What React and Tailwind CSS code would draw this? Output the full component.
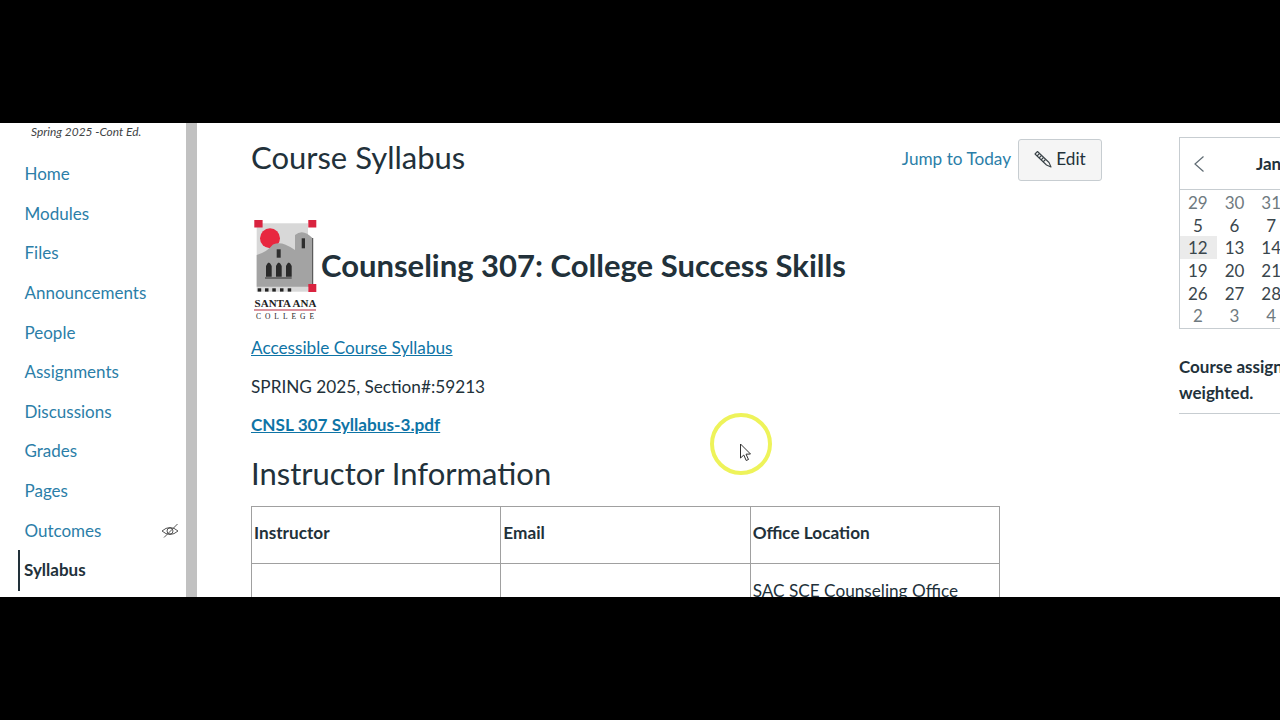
import React from 'react';

const navItems = ['Home', 'Modules', 'Files', 'Announcements', 'People', 'Assignments', 'Discussions', 'Grades', 'Pages'];

const calendarRows = [
    [['29', 1], ['30', 1], ['31', 1]],
    [['5'], ['6'], ['7']],
    [['12', 0, 1], ['13'], ['14']],
    [['19'], ['20'], ['21']],
    [['26'], ['27'], ['28']],
    [['2', 1], ['3', 1], ['4', 1]],
];

const Logo = () => (
    <svg width="66" height="103" viewBox="0 0 66 103" className="shrink-0">
        <rect x="5.700" y="6.300" width="51.300" height="68.400" fill="#d8d8d8" />
        <circle cx="19" cy="21.300" r="10" fill="#e8273f" />
        <path d="M5.700 38 Q16 35 22 27.500 Q28 25 34 27.500 Q40 30 44 33 L44 18 Q52 11 61.700 21.300 L61.700 69.700 L5.700 69.700 Z" fill="#a3a3a3" />
        <rect x="61.200" y="21" width="1" height="49" fill="#444" />
        <rect x="50.700" y="21.300" width="3.300" height="10" fill="#2e2e2e" />
        <rect x="25.700" y="32.300" width="4" height="8.400" fill="#2e2e2e" />
        <path d="M15 59.700 V49 Q17.800 42 20.700 49 V59.700 Z M25 59.700 V49 Q27.800 42 30.700 49 V59.700 Z M35 59.700 V49 Q37.800 42 40.700 49 V59.700 Z" fill="#2a2a2a" />
        <rect x="14" y="60.500" width="26.700" height="1" fill="#2e2e2e" />
        <rect x="3.300" y="3" width="8.300" height="7.500" fill="#d9233f" />
        <rect x="57.300" y="3" width="8" height="7.500" fill="#d9233f" />
        <rect x="57.300" y="67" width="8" height="8" fill="#d9233f" />
        <rect x="6.700" y="71.300" width="3.500" height="3.300" fill="#222" />
        <rect x="14" y="71.300" width="3.500" height="3.300" fill="#222" />
        <rect x="21.300" y="71.300" width="3.500" height="3.300" fill="#222" />
        <rect x="29" y="71.300" width="3.500" height="3.300" fill="#222" />
        <rect x="36.700" y="71.300" width="3.500" height="3.300" fill="#222" />
        <text x="34.500" y="90" textAnchor="middle" fontFamily="Liberation Serif, serif" fontWeight="700" fontSize="11" fill="#222">SANTA ANA</text>
        <rect x="3" y="92.500" width="62" height="1" fill="#b8283c" />
        <text x="36" y="101.500" textAnchor="middle" fontFamily="Liberation Serif, serif" fontSize="7.500" letterSpacing="4" fill="#222">COLLEGE</text>
    </svg>
);

const PencilIcon = () => (
    <svg width="18" height="18" viewBox="0 0 18 18" fill="none" stroke="#3b4449" strokeWidth="1.100" strokeLinejoin="round">
        <path d="M1 4 L3.500 1.500 L15 12.500 L17 17 L12.500 15 Z" />
        <path d="M3 6 L5.500 3.500 M5 8 L7.500 5.500 M7 10 L9.500 7.500 M9 12 L11.500 9.500" />
    </svg>
);

const EyeOffIcon = () => (
    <svg width="18" height="16" viewBox="0 0 18 16" fill="none" stroke="#555" strokeWidth="1">
        <path d="M1 8 Q9 1 17 8 Q9 15 1 8 Z" />
        <circle cx="9" cy="8" r="3" />
        <path d="M3 14.500 L16.500 1" />
    </svg>
);

const App = () => {
    return (
        <div className="w-[1280px] h-[720px] bg-black pt-[123px] pb-[123px] overflow-hidden" style={{ fontFamily: 'Lato, sans-serif' }}>
            <div className="relative flex h-[474px] bg-white overflow-hidden text-[#22313a]">
                {/* left course nav */}
                <div className="w-[186px] shrink-0">
                    <div className="pl-[31px] h-[17px] text-[11.900px] leading-[17px] italic text-[#3f4446]">Spring 2025 -Cont Ed.</div>
                    <nav className="pt-[14px] text-[17px]">
                        {navItems.map((item) => (
                            <div key={item} className="h-[39.650px] pl-[24.500px] leading-[40px] text-[#2b7ea8]">{item}</div>
                        ))}
                        <div className="h-[39.650px] pl-[24.500px] pr-[7px] flex items-center justify-between text-[#2b7ea8]">
                            Outcomes
                            <EyeOffIcon />
                        </div>
                        <div className="h-[41px] ml-[18px] pl-[4px] border-l-2 border-[#22313a] leading-[39px] font-bold text-[#22313a]">Syllabus</div>
                    </nav>
                </div>
                <div className="w-[11px] shrink-0 bg-[#c1c1c1]" />

                {/* main content */}
                <div className="w-[905px] shrink-0 pl-[54px]">
                    <div className="flex items-center justify-between h-[72px]">
                        <h1 className="pb-[3px] text-[31px] leading-none">Course Syllabus</h1>
                        <div className="flex items-center gap-[7px]">
                            <a className="pb-[1px] text-[17.200px] text-[#2b7ea8]">Jump to Today</a>
                            <button className="flex items-center gap-[4px] w-[84px] h-[42px] mt-[1px] pb-[2px] justify-center rounded-[3px] border border-[#c7cdd1] bg-[#f5f5f5] text-[17.200px]">
                                <PencilIcon />
                                Edit
                            </button>
                        </div>
                    </div>
                    <div className="flex items-center h-[103px] mt-[22px]">
                        <Logo />
                        <h2 className="ml-[4px] pb-[7px] text-[31px] font-bold leading-none">Counseling 307: College Success Skills</h2>
                    </div>
                    <p className="mt-[15px] text-[17.200px] leading-[25px]"><a className="underline text-[#0e74a6]">Accessible Course Syllabus</a></p>
                    <p className="mt-[13.700px] text-[17.200px] leading-[25px]">SPRING 2025, Section#:59213</p>
                    <p className="mt-[13.700px] text-[17.200px] leading-[25px] font-bold"><a className="underline text-[#0e74a6]">CNSL 307 Syllabus-3.pdf</a></p>
                    <h2 className="mt-[14px] text-[31px] leading-[44px]">Instructor Information</h2>
                    <table className="mt-[11px] w-[749px] table-fixed border-collapse text-[17.200px]">
                        <tbody>
                            <tr className="h-[57px] font-bold">
                                <td className="border border-[#a0a0a0] px-[2px] pb-[5px]">Instructor</td>
                                <td className="border border-[#a0a0a0] px-[2px] pb-[5px]">Email</td>
                                <td className="border border-[#a0a0a0] px-[2px] pb-[5px]">Office Location</td>
                            </tr>
                            <tr className="h-[60px]">
                                <td className="border border-[#a0a0a0] px-[2px]" />
                                <td className="border border-[#a0a0a0] px-[2px]" />
                                <td className="border border-[#a0a0a0] px-[2px] align-top pt-[14px]">SAC SCE Counseling Office</td>
                            </tr>
                        </tbody>
                    </table>
                </div>

                {/* right sidebar */}
                <div className="w-[240px] shrink-0 ml-[77px] pt-[14px]">
                    <div className="w-[240px] h-[192px] border border-[#c7cdd1]">
                        <div className="flex items-center h-[52px] border-b border-[#c7cdd1]">
                            <svg width="12" height="18" viewBox="0 0 12 18" fill="none" stroke="#5f6b73" strokeWidth="1.200" className="ml-[13px]">
                                <path d="M10.500 1.500 L2 9 L10.500 16.500" />
                            </svg>
                            <span className="ml-[51px] text-[17px] font-bold">Jan</span>
                        </div>
                        <div className="pt-[1px]">
                            {calendarRows.map((row, i) => (
                                <div key={i} className="flex h-[22.700px]">
                                    {row.map(([day, muted, today]) => (
                                        <div
                                            key={day}
                                            className={`w-[36.700px] pr-[1px] text-center text-[17px] leading-[23px] ${muted ? 'text-[#6f7a80]' : 'text-[#3a464c]'} ${today ? 'bg-[#ebebeb]' : ''}`}
                                        >
                                            {day}
                                        </div>
                                    ))}
                                </div>
                            ))}
                        </div>
                    </div>
                    <p className="mt-[25px] w-[240px] text-[17px] leading-[26px] font-bold pb-[7px] border-b border-[#c7cdd1]">
                        Course assignments are<br />weighted.
                    </p>
                </div>

                {/* recorded mouse highlight */}
                <div className="absolute left-[710px] top-[290px] w-[62px] h-[62px] rounded-full border-[4px] border-[#eef35a]" />
                <svg width="14" height="20" viewBox="0 0 14 20" className="absolute left-[739px] top-[320px]">
                    <path d="M1.500 1 L1.500 15 L4.800 12 L7.200 17.500 L9.500 16.500 L7 11.200 L11.500 11 Z" fill="#fff" stroke="#333" strokeWidth="1" strokeLinejoin="round" />
                </svg>
            </div>
        </div>
    );
};

export default App;
